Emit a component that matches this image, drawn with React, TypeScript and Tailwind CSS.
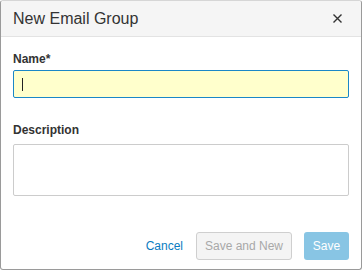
const font = { fontFamily: '"Liberation Sans", Arial, Helvetica, sans-serif' };

function CloseIcon() {
  return (
    <svg width="9" height="9" viewBox="0 0 9 9" className="shrink-0">
      <path d="M0.5 0.5 L8.5 8.5 M8.5 0.5 L0.5 8.5" stroke="#333" strokeWidth="1.4" />
    </svg>
  );
}

export default function App() {
  return (
    <div className="h-[271px] w-[362px] bg-white" style={font}>
      <div className="flex h-[270px] w-[362px] flex-col rounded-[3px] border border-[#9a9a9a] border-t-[#d6d6d6] bg-white">
        <div className="flex h-[36px] shrink-0 items-center justify-between rounded-t-[3px] border-b border-[#e3e3e3] bg-[#f5f5f5] pl-3 pr-[19px]">
          <span className="text-[16px] leading-none text-[#333]">New Email Group</span>
          <button className="flex items-center">
            <CloseIcon />
          </button>
        </div>

        <div className="flex flex-1 flex-col px-3 pt-[14px]">
          <label className="mb-[3px] block text-[12px] font-bold leading-4 text-[#333]">Name*</label>
          <div className="flex h-[28px] items-center rounded-[2px] border border-[#1a87c7] bg-[#ffffcc] pl-2">
            <span className="h-[13px] w-px bg-[#222]" />
          </div>

          <label className="mb-[6px] mt-[24px] block text-[12px] font-bold leading-4 text-[#333]">
            Description
          </label>
          <div className="h-[52px] rounded-[2px] border border-[#cccccc] bg-white" />

          <div className="mt-[36px] flex items-center justify-end">
            <button className="text-[12px] text-[#0a7cc1]">Cancel</button>
            <button className="ml-[13px] h-[28px] w-[96px] rounded-[3px] border border-[#cfcfcf] bg-[#f4f4f4] text-[12px] text-[#a8a8a8]">
              Save and New
            </button>
            <button className="ml-[12px] h-[28px] w-[45px] rounded-[3px] bg-[#88c5e4] text-[12px] text-white">
              Save
            </button>
          </div>
        </div>
      </div>
    </div>
  );
}
